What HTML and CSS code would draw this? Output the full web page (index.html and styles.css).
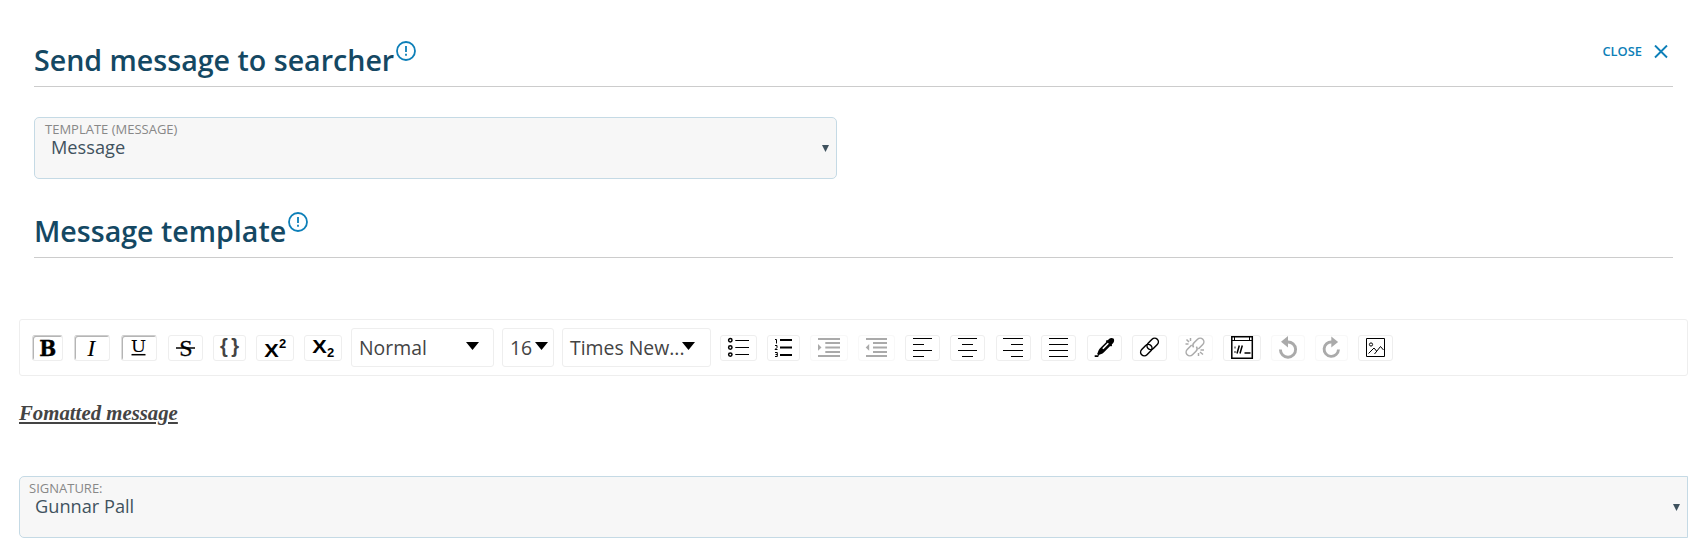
FILE: index.html
```html
<!DOCTYPE html>
<html lang="en">
<head>
<meta charset="utf-8">
<title>Send message to searcher</title>
<link rel="stylesheet" href="styles.css">
</head>
<body>
<header class="section-head">
  <h1 class="title">Send message to searcher</h1>
  <svg class="info" width="20" height="20" viewBox="0 0 20 20"><circle cx="10" cy="10" r="9"/><path d="M10 5v6M10 12.800v2"/></svg>
  <a class="close">CLOSE<svg width="14" height="14" viewBox="0 0 14 14"><path d="M1 .5l12 12M13 .5L1 12.500"/></svg></a>
</header>
<div class="field template">
  <label class="label">TEMPLATE (MESSAGE)</label>
  <div class="value">Message</div>
  <i class="caret"></i>
</div>
<header class="section-head second">
  <h1 class="title">Message template</h1>
  <svg class="info" width="20" height="20" viewBox="0 0 20 20"><circle cx="10" cy="10" r="9"/><path d="M10 5v6M10 12.800v2"/></svg>
</header>
<main class="editor">
  <div class="toolbar">
    <button class="btn on w31"><svg viewBox="1 1 29 24"><text class="slab" x="7.300" y="20.700" font-size="22.500" textLength="17" lengthAdjust="spacingAndGlyphs" font-weight="bold" stroke="#000" stroke-width=".4">B</text></svg></button>
    <button class="btn on w36 push"><svg viewBox="1 1 34 24"><text class="serif" x="13.300" y="20.700" font-size="24" font-style="italic">I</text></svg></button>
    <button class="btn on w36 push"><svg viewBox="1 1 34 24"><text class="slab" x="9.700" y="16.800" font-size="17" textLength="15.500" lengthAdjust="spacingAndGlyphs">U</text><path class="s15" d="M10.500 19.700h14"/></svg></button>
    <button class="btn w35 push"><svg viewBox="1 1 33 24"><text class="serif" x="11.300" y="20.700" font-size="24" stroke="#000" stroke-width=".3">S</text><path class="s15" d="M8 13h19"/></svg></button>
    <button class="btn w33"><svg viewBox="1 1 31 24"><g class="sans" fill="#444" font-size="20"><text x="7" y="18">{</text><text x="18.200" y="18">}</text></g></svg></button>
    <button class="btn w38"><svg viewBox="1 1 36 24"><g class="sans"><text x="8.300" y="21.500" font-size="17.500" textLength="14.500" lengthAdjust="spacingAndGlyphs">X</text><text x="23" y="13.300" font-size="13">2</text></g></svg></button>
    <button class="btn w38"><svg viewBox="1 1 36 24"><g class="sans"><text x="8.300" y="17.500" font-size="17.500" textLength="14.500" lengthAdjust="spacingAndGlyphs">X</text><text x="23" y="21.700" font-size="13">2</text></g></svg></button>
    <div class="select style">Normal<i class="tri"></i></div>
    <div class="select size">16<i class="tri"></i></div>
    <div class="select font">Times New...<i class="tri"></i></div>
    <button class="btn w37 after"><svg viewBox="1 1 35 24"><g class="s15"><circle cx="10.300" cy="5.300" r="1.700"/><circle cx="10.300" cy="12.500" r="1.700"/><circle cx="10.300" cy="19.600" r="1.700"/></g><path class="s1" d="M15.300 5.500H29M15.300 12.500H29M15.300 19.500H29"/></svg></button>
    <button class="btn w33"><svg viewBox="1 1 31 24"><path class="s2" d="M13 5h12M13 12.500h12M13 20h12"/><path class="s1" d="M8 4.500h1.500v4M8 10.500h2v2l-2 2h2.500M8 17.500h2.300v4H8M8.500 19.500h1.800"/></svg></button>
    <button class="btn off w38"><svg viewBox="1 1 36 24"><path class="s2" d="M8 4h22M15.300 8h14.700M15.300 12.500h14.700M15.300 17h14.700M8 21h22"/><path class="solid" d="M8 9l3.500 3.400L8 15.800z"/></svg></button>
    <button class="btn off w37"><svg viewBox="1 1 35 24"><path class="s2" d="M8 4h21M15 8h14M15 12.500h14M15 17h14M8 21h21"/><path class="solid" d="M11.200 9l-3.500 3.400 3.500 3.400z"/></svg></button>
    <button class="btn w35"><svg viewBox="1 1 33 24"><path class="s1" d="M8 3.500h19M8 9.500h11M8 15.500h19M8 21.500h11"/></svg></button>
    <button class="btn w35"><svg viewBox="1 1 33 24"><path class="s1" d="M8 3.500h19M12 9.500h11M8 15.500h19M12 21.500h11"/></svg></button>
    <button class="btn w35 push"><svg viewBox="1 1 33 24"><path class="s1" d="M7 3.500h20M15 9.500h12M7 15.500h20M15 21.500h12"/></svg></button>
    <button class="btn w35"><svg viewBox="1 1 33 24"><path class="s1" d="M8 3.500h19M8 9.500h19M8 15.500h19M8 21.500h19"/></svg></button>
    <button class="btn w35 push"><svg viewBox="1 1 33 24"><path class="solid" d="M26.500 3.500c-1.500-1-3.300-.6-4.500.5l-1.200 1.200-.9-.3-1 1 .4 1-6.500 6.600c-1.500 1.600-1.500 3.300-2.700 5.500l1.400 1.200c2-.9 3.700-1.100 5.200-2.600l6.500-6.500.9.400 1-1-.3-1 1.400-1.500c1.100-1.200 1.300-3.200.3-4.500z"/><path class="solid" d="M7.700 20.300h4.500L11 22H7.700z"/><path class="shine" d="M21.300 8.300L15.800 13.800"/></svg></button>
    <button class="btn w35"><svg viewBox="1 1 33 24"><g class="s15" transform="translate(17.500 12) rotate(-45)"><rect x="-11" y="-3.700" width="13" height="7.400" rx="3.700"/><rect x="-2" y="-3.700" width="13" height="7.400" rx="3.700"/></g></svg></button>
    <button class="btn off w35 push"><svg viewBox="1 1 33 24"><g class="s15" transform="translate(17 12) rotate(-45)"><path d="M-1 -3.700h-6.300a3.700 3.700 0 0 0 0 7.400h5a3.700 3.700 0 0 0 3.600-3M1 3.700h6.300a3.700 3.700 0 0 0 0-7.400h-5a3.700 3.700 0 0 0-3.600 3"/></g><path class="s15" d="M12.500 3v3M8.500 4.500l2.500 2.500M7.500 9h3M20.500 18v3M22 17l3 2.500M22.500 15h3.500"/></svg></button>
    <button class="btn w38"><svg viewBox="1 1 36 24"><path class="s15" d="M8.800 1.800h20.500v21.400H8.800z"/><path class="s1" d="M8.800 5.500h20.500M11.500 2v3M26.500 2v3"/><path class="s15" d="M16.300 10.500l-2.300 8M19.300 10.500l-2.300 8M21.500 18h6"/><path class="dots" d="M12 11.500v2M12 16v2"/></svg></button>
    <button class="btn off w34"><svg viewBox="1 1 32 24"><path d="M16.500 7A7.600 7.600 0 1 1 9.400 14.500" stroke-width="2.900"/><path class="solid" d="M17 1v11.500L10 6.700z"/></svg></button>
    <button class="btn off w33"><svg viewBox="1 1 31 24"><path d="M17 7A7.200 7.200 0 1 0 23.500 14.500" stroke-width="2.900"/><path class="solid" d="M16.300 1.500v11l6.800-5.600z"/></svg></button>
    <button class="btn w35"><svg viewBox="1 1 33 24"><path class="s1" d="M8.500 3.500h18v18h-18zM10.500 18.500l5.500-5.500 2.500 3M16.500 19l6-7.500 3 3.500"/><circle class="s1" cx="13" cy="9.500" r="1.600"/></svg></button>
  </div>
  <p class="message">Fomatted message</p>
  <div class="field signature">
    <label class="label">SIGNATURE:</label>
    <div class="value">Gunnar Pall</div>
    <i class="caret"></i>
  </div>
</main>
</body>
</html>
```
FILE: styles.css
```css
* { box-sizing: border-box; }
body {
  margin: 0;
  padding: 34px 17px 0 19px;
  background: #fff;
  font-family: "Open Sans", sans-serif;
  color: #444;
}
.section-head {
  display: flex;
  align-items: flex-start;
  height: 53px;
  margin: 0 15px;
  border-bottom: 1px solid #ccc;
}
.title {
  margin: 5px 2px 0 0;
  font-size: 28.6px;
  line-height: 41px;
  font-weight: 600;
  color: #144863;
  white-space: nowrap;
}
.info {
  margin-top: 7px;
  fill: none;
  stroke: #0d7fb8;
  stroke-width: 1.8;
}
.close {
  display: flex;
  align-items: center;
  gap: 12px;
  margin: 8px 5px 0 auto;
  font-size: 12.9px;
  line-height: 19px;
  font-weight: 600;
  color: #0d7fb8;
}
.close svg { stroke: #0d7fb8; stroke-width: 1.9; }
.field {
  position: relative;
  height: 62px;
  padding: 2px 10px;
  border: 1px solid #c5dae5;
  border-radius: 5px;
  background: #f7f7f7;
}
.template { width: 803px; margin: 30px 0 0 15px; }
.label {
  display: block;
  font-size: 13px;
  line-height: 18px;
  color: #888;
}
.value {
  margin-top: -1px;
  padding-left: 6px;
  font-size: 18.2px;
  line-height: 20px;
  color: #3f525e;
}
.caret {
  position: absolute;
  right: 7px;
  top: 27px;
  width: 7px;
  height: 7px;
  background: #3f525e;
  clip-path: polygon(0 0, 100% 0, 50% 100%);
}
.second { margin-top: 26px; }
.editor { padding-top: 61px; }
.toolbar {
  display: flex;
  align-items: center;
  gap: 10px;
  height: 57px;
  padding-left: 12px;
  border: 1px solid #eee;
  border-radius: 3px;
}
.btn {
  flex: none;
  height: 26px;
  padding: 0;
  border: 1px solid #eee;
  border-radius: 3px;
  background: #fff;
  color: #000;
}
.btn svg { display: block; width: 100%; height: 24px; fill: none; stroke: none; }
.btn path, .btn .s15, .btn .s1 { stroke: currentColor; }
.btn text { fill: currentColor; }
.btn.on { box-shadow: inset 1px 1px 0 #b5b5b5; border-top-color: #ccc; border-left-color: #ddd; }
.btn.off { color: #aaa; border-color: #f8f8f8; }
.btn .s1 { stroke-width: 1; }
.btn .s15 { stroke-width: 1.5; }
.btn .s2 { stroke-width: 2; }
.btn .solid { fill: currentColor; stroke: none; }
.btn .shine { stroke: #fff; stroke-width: 1.6; }
.btn .dots { stroke: #666; stroke-width: 1.5; }
.btn .slab { font-family: "DejaVu Serif", serif; }
.btn .serif { font-family: "Liberation Serif", serif; }
.btn .sans { font-family: "Liberation Sans", sans-serif; font-weight: bold; }
.btn g[fill] text { fill: #444; }
.w31 { width: 31px; }
.w33 { width: 33px; }
.w34 { width: 34px; }
.w35 { width: 35px; }
.w36 { width: 36px; }
.w37 { width: 37px; }
.w38 { width: 38px; }
.push { margin-left: 1px; }
.after { margin-left: -2px; }
.select {
  display: flex;
  flex: none;
  justify-content: space-between;
  height: 39px;
  padding-left: 8px;
  border: 1px solid #eee;
  border-radius: 3px;
  font-size: 19.4px;
  line-height: 38px;
  white-space: nowrap;
}
.tri {
  flex: none;
  width: 13px;
  height: 8px;
  margin-top: 13px;
  background: #000;
  clip-path: polygon(0 0, 100% 0, 50% 100%);
}
.style { width: 143px; margin-left: -1px; padding-left: 7px; padding-right: 14px; }
.size { width: 52px; margin-left: -2px; padding-left: 7px; padding-right: 5px; }
.font { width: 149px; margin: 0 1px 0 -2px; padding-left: 7px; padding-right: 15px; }
.font .tri { margin-left: -4px; }
.message {
  margin: 24px 0 0;
  font: italic bold 20.8px/26px "Liberation Serif", serif;
  text-decoration: underline;
}
.signature { margin-top: 50px; padding-left: 9px; border-radius: 5px 0 0 5px; }
```
